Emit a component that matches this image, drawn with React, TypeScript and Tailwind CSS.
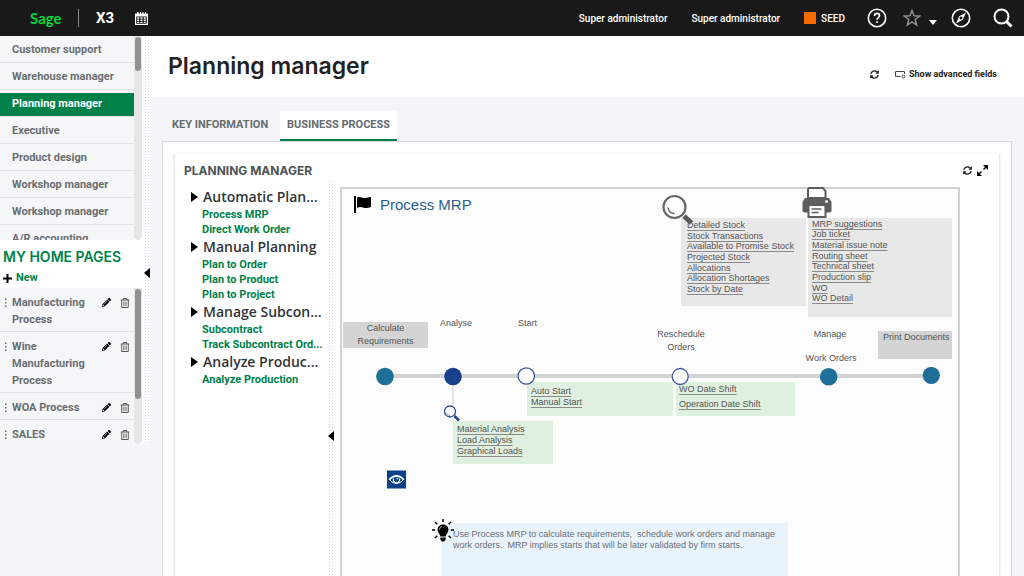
import React from 'react';
import { FaPencilAlt, FaRegTrashAlt, FaSyncAlt } from 'react-icons/fa';

const pages = [
  'Customer support',
  'Warehouse manager',
  'Planning manager',
  'Executive',
  'Product design',
  'Workshop manager',
  'Workshop manager',
  'A/R accounting',
];

const homePages = ['Manufacturing Process', 'Wine Manufacturing Process', 'WOA Process', 'SALES'];

const tree = [
  { title: 'Automatic Plan...', links: ['Process MRP', 'Direct Work Order'] },
  { title: 'Manual Planning', links: ['Plan to Order', 'Plan to Product', 'Plan to Project'] },
  { title: 'Manage Subcon...', links: ['Subcontract', 'Track Subcontract Ord...'] },
  { title: 'Analyze Produc...', links: ['Analyze Production'] },
];

const stockLinks = [
  'Detailed Stock',
  'Stock Transactions',
  'Available to Promise Stock',
  'Projected Stock',
  'Allocations',
  'Allocation Shortages',
  'Stock by Date',
];

const printLinks = [
  'MRP suggestions',
  'Job ticket',
  'Material issue note',
  'Routing sheet',
  'Technical sheet',
  'Production slip',
  'WO',
  'WO Detail',
];

const dots = 'bg-white bg-[radial-gradient(circle,#c9ced1_0.7px,transparent_0.8px)] bg-[size:3px_3px]';

const Header = () => (
  <header className="flex h-9 shrink-0 items-center bg-[#191919] pr-[11px] font-['Roboto',sans-serif] text-[11px] font-medium text-white">
    <a href="#" className="ml-[30px] w-[48px] font-['Lato',sans-serif] text-[15px] font-bold text-[#00d639]">Sage</a>
    <span className="h-[18px] w-px bg-[#8a8a8a]" />
    <span className="ml-[17px] w-[39px] text-[15px] font-bold">X3</span>
    <button aria-label="Calendar">
      <svg width="13" height="13" viewBox="0 0 13 13" fill="#fff">
        <path fillRule="evenodd" d="M0 1.500h2V0h1.500v1.500h1.500V0h1v1.500h1.500V0h1v1.500h1.500V0h1v1.500H13V13H0zM1.200 4.500v7.300h10.600V4.500z" />
        <path d="M2.200 5.300h2v1.500h-2zM5.500 5.300h2v1.500h-2zM8.800 5.300h2v1.500h-2zM2.200 7.500h2V9h-2zM5.500 7.500h2V9h-2zM8.800 7.500h2V9h-2zM2.200 9.700h2v1.300h-2zM5.500 9.700h2v1.300h-2zM8.800 9.700h2v1.300h-2z" />
      </svg>
    </button>
    <div className="ml-auto flex items-center">
      <button className="mr-6 text-[10px]">Super administrator</button>
      <button className="mr-6 text-[10px]">Super administrator</button>
      <button className="mr-[22px] flex items-center gap-[5px] text-[10px]">
        <span className="h-3 w-3 bg-[#f56b00]" />
        SEED
      </button>
      <button aria-label="Help" className="mr-4">
        <svg width="20" height="20" viewBox="0 0 20 20" fill="none" stroke="#fff" strokeWidth="1.6">
          <circle cx="10" cy="10" r="8.700" />
          <path d="M7.500 8c0-1.700 1-2.600 2.500-2.600s2.500 1 2.500 2.300c0 1.900-2.500 2-2.500 4.100M10 13.200v1.700" />
        </svg>
      </button>
      <button aria-label="Favourites" className="flex items-end">
        <svg width="18" height="18" viewBox="0 0 18 18" fill="none" stroke="#8c8c8c" strokeWidth="1.5">
          <path d="M9 1.500l2 5.300 5.700.2-4.500 3.500 1.600 5.500L9 12.900 4.200 16l1.600-5.500L1.300 7l5.700-.2z" />
        </svg>
        <svg width="8" height="7" viewBox="0 0 8 7" fill="#fff" className="ml-2">
          <path d="M0 0h8L4 5z" />
        </svg>
      </button>
      <button aria-label="Navigation" className="ml-[14px]">
        <svg width="20" height="20" viewBox="0 0 20 20" fill="none" stroke="#fff" strokeWidth="1.6">
          <circle cx="10" cy="10" r="8.700" />
          <path fill="#fff" fillRule="evenodd" stroke="none" d="M15 4.500l-3.200 7.300L5 15.500l3.200-7.300zM10 8.500a1.500 1.500 0 1 0 .01 0z" />
        </svg>
      </button>
      <button aria-label="Search" className="ml-[22px]">
        <svg width="20" height="20" viewBox="0 0 20 20" fill="none" stroke="#fff" strokeWidth="2">
          <circle cx="8.500" cy="8.500" r="7" />
          <path strokeWidth="3" d="M13.500 13.500l5 5" />
        </svg>
      </button>
    </div>
  </header>
);

const Scrollbar = ({ thumb }: { thumb: string }) => (
  <div className="mr-0.5 w-2 shrink-0 rounded-b bg-[#e6e6e6] px-px pt-px">
    <div className={`rounded-full bg-[#929292] ${thumb}`} />
  </div>
);

const Collapse = ({ className }: { className: string }) => (
  <button aria-label="Collapse" className={`absolute ${className}`}>
    <svg width="6" height="10" viewBox="0 0 6 10" className="block">
      <path d="M6 0v10L0 5z" />
    </svg>
  </button>
);

const Sidebar = () => (
  <aside className="flex w-[150px] shrink-0 self-start bg-white font-['Roboto',sans-serif] text-[11px] font-bold text-[#6a6e70]">
    <div className="w-36">
      <div className="flex h-[204px]">
        <ul className="flex-1 overflow-hidden bg-[#f5f6f8]">
          {pages.map((page, i) => (
            <li key={i} className="flex h-[27px] items-end border-b border-[#dfe2e4]">
              <a
                href="#"
                className={`block h-[23px] w-full pl-3 leading-[21px] whitespace-nowrap ${page === 'Planning manager' ? 'bg-[#00814a] text-white' : ''}`}
              >
                {page}
              </a>
            </li>
          ))}
        </ul>
        <Scrollbar thumb="h-[34px]" />
      </div>
      <div className="h-12 pt-[7px] pl-[3px]">
        <h2 className="font-['Inter',sans-serif] text-[14px] leading-5 font-semibold whitespace-nowrap text-[#00814a]">MY HOME PAGES</h2>
        <button className="flex h-[22px] items-center gap-1 text-[#00814a]">
          <svg width="9" height="9" viewBox="0 0 9 9" stroke="#000" strokeWidth="2">
            <path d="M4.500 0v9M0 4.500h9" />
          </svg>
          New
        </button>
      </div>
      <div className="flex h-[156px]">
        <ul className="flex-1 overflow-hidden bg-[#f5f6f8]">
          {homePages.map((page) => (
            <li key={page} className="flex border-b border-[#dfe2e4] pt-[6px] pb-[3px] leading-[17px] last:border-0">
              <svg width="12" height="17" viewBox="0 0 12 17" fill="#6a6e70" className="shrink-0">
                <path d="M5 4.500h1.500V6H5zM5 8h1.500v1.500H5zM5 11.500h1.500V13H5z" />
              </svg>
              <a href="#" className="w-[90px]">{page}</a>
              <button aria-label="Edit" className="flex h-[17px] w-[18px] items-center text-black">
                <FaPencilAlt size={9} />
              </button>
              <button aria-label="Delete" className="flex h-[17px] items-center text-[#55544f]">
                <FaRegTrashAlt size={10} />
              </button>
            </li>
          ))}
        </ul>
        <Scrollbar thumb="h-[110px]" />
      </div>
    </div>
    <div className={`relative w-1.5 ${dots}`}>
      <Collapse className="top-[232px] right-0" />
    </div>
  </aside>
);

const LinkList = ({ items, className }: { items: string[]; className: string }) => (
  <ul className={`grid auto-rows-fr ${className}`}>
    {items.map((item) => (
      <li key={item} className="flex items-center">
        <a href="#" className="leading-[9px] whitespace-nowrap underline decoration-[#8a8a8a] underline-offset-2">{item}</a>
      </li>
    ))}
  </ul>
);

// Flow chart canvas, every node is placed in its coordinates
const ProcessMap = () => (
  <div className="relative mr-[39px] flex-1 border-2 border-b-0 border-[#d0d1d3] bg-[#fcfcfc] font-['Liberation_Sans',sans-serif] text-[9px] text-[#555]">
    <h3 className="absolute top-[6px] left-[38px] text-[15px] leading-5 text-[#2d5f8b]">Process MRP</h3>

    <div className="absolute top-[29px] left-[339px] h-[88px] w-[125px] bg-[#e8e8e8] pt-0.5 pl-[6px]">
      <LinkList items={stockLinks} className="h-[75px]" />
    </div>
    <div className="absolute top-[29px] left-[466px] h-[99px] w-[144px] bg-[#e8e8e8] pt-px pl-1">
      <LinkList items={printLinks} className="h-[85px]" />
    </div>
    <div className="absolute top-[133px] left-px h-[26px] w-[85px] bg-[#d4d4d4] text-center leading-[13px]">
      Calculate <br /> Requirements
    </div>
    <div className="absolute top-[128px] left-[98px] leading-[13px]">Analyse</div>
    <div className="absolute top-[128px] left-[176px] leading-[13px]">Start</div>
    <div className="absolute top-[139px] left-[309px] w-[60px] text-center leading-[13px]">Reschedule Orders</div>
    <div className="absolute top-[139px] left-[458px] w-[60px] text-center leading-[13px]">Manage</div>
    <div className="absolute top-[163px] left-[458px] w-[62px] text-center leading-[13px]">Work Orders</div>
    <div className="absolute top-[142px] left-[536px] h-7 w-[74px] bg-[#d4d4d4] pl-[5px] leading-[13px] whitespace-nowrap">
      Print Documents
    </div>
    <div className="absolute top-[193px] left-[185px] h-[34px] w-[146px] bg-[#dfefe0] pt-1 pl-1">
      <LinkList items={['Auto Start', 'Manual Start']} className="h-[22px]" />
    </div>
    <div className="absolute top-[193px] left-[334px] h-[34px] w-[119px] bg-[#dfefe0] pl-[3px]">
      <LinkList items={['WO Date Shift', 'Operation Date Shift']} className="h-[30px]" />
    </div>
    <div className="absolute top-[232px] left-[111px] h-[43px] w-[100px] bg-[#dfefe0] pt-[3px] pl-1">
      <LinkList items={['Material Analysis', 'Load Analysis', 'Graphical Loads']} className="h-[33px]" />
    </div>
    <p className="absolute top-[334px] left-[100px] h-[80px] w-[346px] bg-[#e8f3fb] pt-[6px] pl-[11px] leading-[11px] whitespace-pre text-[#6b6f78]">
      {'Use Process MRP to calculate requirements,  schedule work orders and manage\nwork orders.  MRP implies starts that will be later validated by firm starts.'}
    </p>

    <svg width="616" height="420" viewBox="342 189 616 420" fill="none" className="pointer-events-none absolute top-0 left-0 overflow-visible">
      {/* Flag */}
      <path fill="#000" d="M354 196h2v17h-2zM357 197.500c3-1.500 5 .5 7.500.5 2.500.2 4-1 6.500-1v10c-2.500 1-5 1.500-8 .5-2-.8-4-.8-6 .5z" />

      {/* Time line */}
      <path stroke="#d3d3d3" strokeWidth="4" d="M376 376h556" />
      <path stroke="#c8ccd4" d="M453 385v21" />
      <circle cx="385" cy="376.500" r="8.800" fill="#1f7096" />
      <circle cx="453" cy="376.500" r="8.800" fill="#1b408b" />
      <circle cx="526.300" cy="376" r="8.200" fill="#fff" stroke="#3d5798" strokeWidth="1.300" />
      <circle cx="680.200" cy="376.500" r="8" fill="#fff" stroke="#3f57a6" strokeWidth="1.300" />
      <circle cx="828.700" cy="376.700" r="8.800" fill="#1f6f99" />
      <circle cx="931.300" cy="375.300" r="8.600" fill="#1f6f99" />

      {/* Magnifiers */}
      <circle cx="450" cy="411.500" r="5.500" fill="#fff" stroke="#274c8d" strokeWidth="1.300" />
      <path stroke="#7f9ac4" d="M446.500 413c.7 1.500 1.800 2.300 3.500 2.300" />
      <path stroke="#1b3f87" strokeWidth="2.500" d="M454.500 416l4.500 4.500" />
      <circle cx="674.500" cy="207" r="11" fill="#fcfcfc" stroke="#666" strokeWidth="2.200" />
      <path stroke="#777" strokeWidth="1.500" strokeLinecap="round" d="M668 208c.8 3.500 3 5.300 6 5.500" />
      <path stroke="#5c5c5c" strokeWidth="5" d="M684 216l7.500 7" />

      {/* Printer */}
      <path fill="#5d5d5d" d="M805 198h24l2.500 4v9.500l-2 1h-5v-6h-15v6h-5l-2-1V202z" />
      <path fill="#fff" stroke="#5d5d5d" strokeWidth="2" d="M808 198v-8c0-1 .5-2 1.500-2h13.500l2.500 3v7zM808.500 205h17v12h-17z" />
      <path stroke="#5d5d5d" strokeWidth="1.500" d="M811.500 209h10M811.500 212.500h7" />
      <circle cx="826.500" cy="201.500" r="1.500" fill="#fff" />

      {/* Eye */}
      <path fill="#0b4186" d="M387 470.500h19v18h-19z" />
      <path fill="#fff" d="M388.500 479.500c4-6 12-6 16 0l-1.500.7c-3.500-4.200-9.500-4.200-13 0z" />
      <path stroke="#fff" d="M390 480c3.500 4.500 9.500 4.500 13 0" />
      <path stroke="#fff" strokeWidth="1.200" d="M393.500 478.500a3.200 3.200 0 1 0 6 0" />
      <circle cx="396.500" cy="479.500" r="2.200" fill="#0b4186" />
      <circle cx="397.200" cy="478.800" r=".8" fill="#fff" />

      {/* Light bulb */}
      <path fill="#000" d="M443 524.500c-3.200 0-5.500 2.300-5.500 5.300 0 3 2.500 4 2.800 6.700h5.400c.3-2.700 2.800-3.700 2.800-6.700 0-3-2.300-5.300-5.500-5.300zM440.300 537.500h5.400v2l-1.500 2h-2.400l-1.500-2z" />
      <path stroke="#000" strokeWidth="1.500" d="M443 519v3M435 522l2.300 2.300M451 522l-2.300 2.300M432 530h3.200M454 530h-3.200M435 538l2.300-2.300M451 538l-2.300-2.300" />
      <path stroke="#fff" strokeWidth=".8" d="M439.500 529.500c.2-1.500 1-2.500 2.500-3" />
    </svg>
  </div>
);

const Tree = () => (
  <nav className="w-[144px] shrink-0 pl-[7px]">
    {tree.map((group) => (
      <div key={group.title}>
        <h3 className="flex h-5 items-center gap-[5px] font-['Open_Sans',sans-serif] text-[14px] leading-5 font-semibold whitespace-nowrap text-[#303438]">
          <svg width="7" height="10" viewBox="0 0 7 10" className="shrink-0">
            <path d="M0 0l7 5-7 5z" />
          </svg>
          {group.title}
        </h3>
        <ul className="pl-[11px] font-['Roboto',sans-serif] text-[11px] leading-[15px] font-bold text-[#00814a]">
          {group.links.map((link) => (
            <li key={link} className="whitespace-nowrap">
              <a href="#">{link}</a>
            </li>
          ))}
        </ul>
      </div>
    ))}
  </nav>
);

export default function App() {
  return (
    <div className="flex h-screen flex-col overflow-hidden bg-[#f4f5f8] font-['Inter',sans-serif] text-[#222]">
      <Header />
      <div className="flex min-h-0 flex-1">
        <Sidebar />
        <main className="flex min-w-0 flex-1 flex-col">
          <div className="flex h-[61px] shrink-0 items-center justify-between bg-white pr-[27px] pl-[18px]">
            <h1 className="text-[23px] font-semibold">Planning manager</h1>
            <div className="flex items-center gap-4 pt-4">
              <button aria-label="Refresh">
                <FaSyncAlt size={9} />
              </button>
              <button className="flex items-center gap-[3px] font-['Roboto',sans-serif] text-[9px] font-bold">
                <svg width="11" height="9" viewBox="0 0 11 9" fill="none" stroke="#444">
                  <path d="M5.500 6.500h-5v-5h9v2.500" />
                  <circle cx="8.500" cy="6.500" r="1.500" />
                </svg>
                Show advanced fields
              </button>
            </div>
          </div>

          <div className="mt-[14px] flex h-[30px] shrink-0 pl-[13px] font-['Roboto',sans-serif] text-[11px] font-bold text-[#666b6e]" role="tablist">
            <button role="tab" className="w-[117px] pb-0.5 pl-[9px] text-left">KEY INFORMATION</button>
            <button role="tab" aria-selected className="w-[117px] border-b-2 border-[#00814a] bg-white">BUSINESS PROCESS</button>
          </div>

          <div className="mr-3 ml-3 flex min-h-0 flex-1 flex-col border border-b-0 border-[#d5dbdf] bg-white px-[11px] pt-3">
            <section className="flex min-h-0 flex-1 flex-col border-x border-[#e8e9ea] pl-[9px] shadow-[0_0_3px_#0000001a]">
              <div className="flex h-[26px] shrink-0 items-center justify-between pt-[7px] pr-[11px]">
                <h2 className="text-[12px] font-bold text-[#4f5355]">PLANNING MANAGER</h2>
                <div className="flex gap-[5px]">
                  <button aria-label="Refresh">
                    <FaSyncAlt size={9} />
                  </button>
                  <button aria-label="Expand">
                    <svg width="11" height="11" viewBox="0 0 11 11" stroke="#111" strokeWidth="1.5">
                      <path stroke="none" d="M6 0h5v5zM0 6v5h5z" />
                      <path d="M9 2L6.500 4.500M2 9l2.500-2.500" />
                    </svg>
                  </button>
                </div>
              </div>
              <div className="flex min-h-0 flex-1">
                <div className="flex pt-[7px]">
                  <Tree />
                </div>
                <div className={`relative mr-1.5 w-1.5 shrink-0 ${dots}`}>
                  <Collapse className="top-[251px] left-0" />
                </div>
                <div className="flex min-w-0 flex-1 pt-[7px]">
                  <ProcessMap />
                </div>
              </div>
            </section>
          </div>
        </main>
      </div>
    </div>
  );
}
